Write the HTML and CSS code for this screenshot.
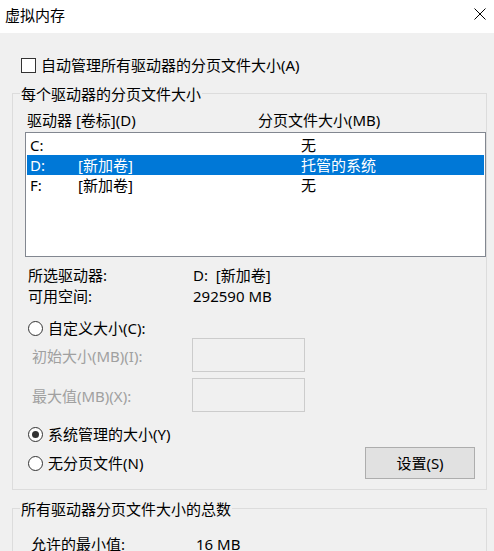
FILE: index.html
```html
<!DOCTYPE html>
<html lang="zh-CN">
<head>
<meta charset="utf-8">
<title>虚拟内存</title>
<link rel="stylesheet" href="styles.css">
</head>
<body>
<div class="window">
  <div class="titlebar">
    <span class="title">虚拟内存</span>
    <svg class="close" width="12" height="12" viewBox="0 0 12 12"><path d="M0.5 0.5L11.5 11.5M11.5 0.5L0.5 11.5" stroke="#000" stroke-width="1" fill="none"/></svg>
  </div>
  <div class="content">
    <div class="check-row"><span class="checkbox"></span><span>自动管理所有驱动器的分页文件大小(A)</span></div>

    <div class="group group-main">
      <div class="group-title">每个驱动器的分页文件大小</div>
      <div class="list-head"><span class="col-drive">驱动器 [卷标](D)</span><span>分页文件大小(MB)</span></div>
      <div class="listbox">
        <div class="list-row"><span class="c1">C:</span><span class="c2"></span><span>无</span></div>
        <div class="list-row selected"><span class="c1">D:</span><span class="c2">[新加卷]</span><span>托管的系统</span></div>
        <div class="list-row"><span class="c1">F:</span><span class="c2">[新加卷]</span><span>无</span></div>
      </div>
      <div class="info">
        <div class="info-row"><span class="info-label">所选驱动器:</span><span>D:&nbsp;&nbsp;[新加卷]</span></div>
        <div class="info-row"><span class="info-label">可用空间:</span><span>292590 MB</span></div>
      </div>
      <div class="radio-row custom"><span class="radio"></span><span>自定义大小(C):</span></div>
      <div class="size-row first"><span class="size-label">初始大小(MB)(I):</span><span class="textbox"></span></div>
      <div class="size-row second"><span class="size-label">最大值(MB)(X):</span><span class="textbox"></span></div>
      <div class="radio-row sys"><span class="radio checked"></span><span>系统管理的大小(Y)</span></div>
      <div class="last-row">
        <div class="radio-row"><span class="radio"></span><span>无分页文件(N)</span></div>
        <button class="btn">设置(S)</button>
      </div>
    </div>

    <div class="group group-total">
      <div class="group-title">所有驱动器分页文件大小的总数</div>
      <div class="total-row"><span class="total-label">允许的最小值:</span><span>16 MB</span></div>
    </div>
  </div>
</div>
</body>
</html>
```

FILE: styles.css
```css
html, body {
  margin: 0;
  padding: 0;
}
body {
  background: #f0f0f0;
  font-family: "Noto Sans", "Noto Sans CJK SC", sans-serif;
  font-size: 15px;
  color: #000;
  width: 494px;
  height: 551px;
  overflow: hidden;
}
.titlebar {
  height: 33px;
  box-sizing: border-box;
  background: #fff;
  display: flex;
  justify-content: space-between;
  align-items: flex-start;
  padding: 6px 8px 0 5px;
}
.title {
  line-height: 18px;
}
.close {
  margin-top: 2px;
  display: block;
}
.content {
  padding-top: 25px;
}
.check-row {
  display: flex;
  align-items: center;
  gap: 5px;
  margin-left: 21px;
  height: 15px;
  line-height: 15px;
}
.checkbox {
  width: 15px;
  height: 15px;
  box-sizing: border-box;
  border: 1px solid #333;
  background: #fff;
  flex: none;
}
.group {
  border: 1px solid #dcdcdc;
  margin-left: 12px;
  width: 475px;
  box-sizing: border-box;
}
.group-main {
  margin-top: 20px;
  padding-bottom: 10px;
}
.group-title {
  width: max-content;
  margin: -9px 0 0 7px;
  padding: 0 1px;
  background: #f0f0f0;
  line-height: 18px;
}
.list-head {
  display: flex;
  margin-top: 8px;
  padding-left: 14px;
  line-height: 18px;
}
.col-drive {
  width: 231px;
}
.listbox {
  margin: 3px 0 0 12px;
  width: 461px;
  height: 125px;
  box-sizing: border-box;
  border: 1px solid #828790;
  background: #fff;
  padding: 2px 1px;
}
.list-row {
  display: flex;
  height: 20px;
  line-height: 20px;
  padding-left: 3px;
}
.list-row.selected {
  background: #0078d7;
  color: #fff;
}
.c1 {
  width: 48px;
}
.c2 {
  width: 223px;
}
.info {
  margin-top: 8px;
  padding-left: 15px;
}
.info-row {
  display: flex;
  line-height: 21px;
}
.info-label {
  width: 165px;
}
.radio-row {
  display: flex;
  align-items: center;
  gap: 5px;
  margin-left: 15px;
  height: 18px;
  line-height: 18px;
}
.radio {
  width: 15px;
  height: 15px;
  box-sizing: border-box;
  border-radius: 50%;
  border: 1px solid #333;
  background: #fff;
  display: flex;
  align-items: center;
  justify-content: center;
  flex: none;
}
.radio.checked::after {
  content: "";
  width: 7px;
  height: 7px;
  border-radius: 50%;
  background: #333;
}
.custom {
  margin-top: 12px;
}
.size-row {
  display: flex;
  align-items: center;
  margin-left: 19px;
  height: 34px;
  color: #a0a0a0;
}
.size-row.first {
  margin-top: 1px;
}
.size-row.second {
  margin-top: 6px;
}
.size-label {
  width: 160px;
}
.textbox {
  width: 113px;
  height: 34px;
  box-sizing: border-box;
  border: 1px solid #cccccc;
  background: #f0f0f0;
}
.sys {
  margin-top: 13px;
}
.last-row {
  display: flex;
  justify-content: space-between;
  align-items: center;
  margin-top: 4px;
  padding-right: 11px;
}
.btn {
  width: 110px;
  height: 32px;
  box-sizing: border-box;
  border: 1px solid #adadad;
  background: #e1e1e1;
  font: inherit;
  color: #000;
  line-height: 30px;
  padding: 0;
}
.group-total {
  margin-top: 18px;
  height: 100px;
}
.total-row {
  display: flex;
  margin-top: 17px;
  padding-left: 18px;
  line-height: 18px;
}
.total-label {
  width: 165px;
}
```
